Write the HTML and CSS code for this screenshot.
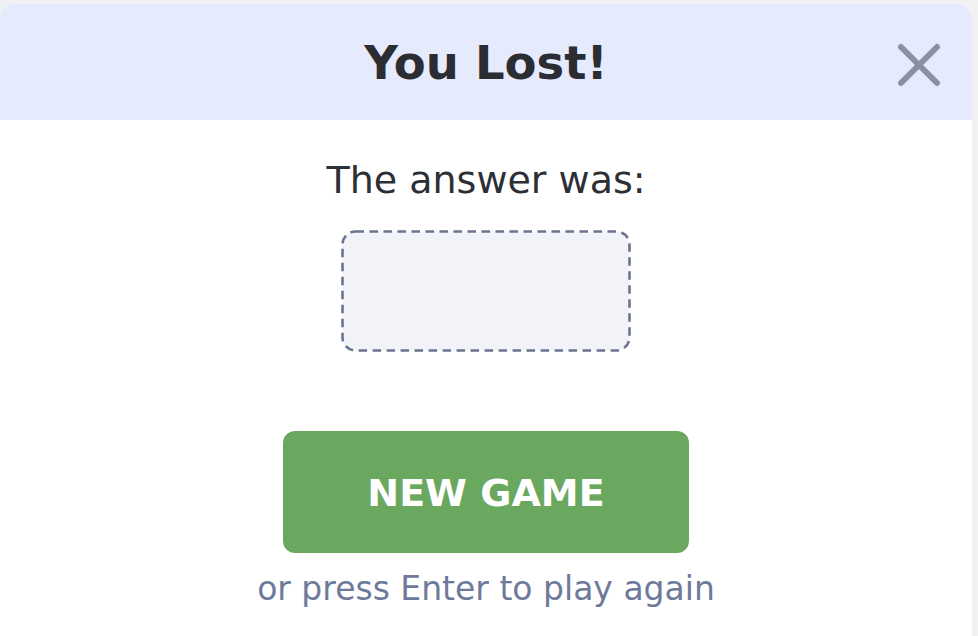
FILE: index.html
```html
<!DOCTYPE html>
<html>
<head>
<meta charset="utf-8">
<link rel="stylesheet" href="styles.css">
</head>
<body>
<div class="modal">
  <div class="modal-header">
    <h1 class="title">You Lost!</h1>
    <button class="close" aria-label="Close">
      <svg width="44" height="44" viewBox="0 0 44 44"><path d="M4 4 L40 40 M40 4 L4 40" stroke="#8a8fa5" stroke-width="6" stroke-linecap="round" fill="none"/></svg>
    </button>
  </div>
  <div class="modal-body">
    <p class="answer-label">The answer was:</p>
    <div class="answer-box">
      <svg width="290" height="122" viewBox="0 0 290 122"><rect x="1.5" y="1.5" width="287" height="119" rx="13" ry="13" fill="#f2f3f9" stroke="#6b7490" stroke-width="2.6" stroke-dasharray="8.5 5.5"/></svg>
    </div>
    <button class="new-game">NEW GAME</button>
    <p class="hint">or press Enter to play again</p>
  </div>
</div>
</body>
</html>
```
FILE: styles.css
```css
html, body {
  margin: 0;
  padding: 0;
  height: 100%;
}
body {
  background: #f1f1f3;
  font-family: "DejaVu Sans", sans-serif;
  overflow: hidden;
}
.modal {
  margin-top: 4px;
  width: 972px;
  height: 632px;
  background: #ffffff;
  border-radius: 14px 14px 0 0;
  overflow: hidden;
}
.modal-header {
  height: 116px;
  background: #e5eafd;
  display: flex;
  align-items: center;
  justify-content: center;
  position: relative;
}
.title {
  margin: 2px 0 0;
  font-size: 46.5px;
  font-weight: 700;
  color: #2b2d33;
}
.close {
  position: absolute;
  right: 31px;
  top: 39px;
  background: none;
  border: none;
  padding: 0;
  width: 44px;
  height: 44px;
}
.close svg { display: block; }
.modal-body {
  display: flex;
  flex-direction: column;
  align-items: center;
}
.answer-label {
  margin: 36px 0 0;
  font-size: 38px;
  font-weight: 400;
  color: #2d2f36;
  line-height: 48px;
}
.answer-box {
  margin-top: 26px;
  width: 290px;
  height: 122px;
}
.answer-box svg { display: block; }
.new-game {
  margin-top: 79px;
  width: 406px;
  height: 122px;
  background: #6aa85f;
  border: none;
  border-radius: 12px;
  color: #ffffff;
  font-family: "DejaVu Sans", sans-serif;
  font-size: 38px;
  font-weight: 700;
  padding-top: 2px;
}
.hint {
  margin: 13px 0 0;
  font-size: 33px;
  color: #6e7a9a;
  line-height: 46px;
}
```
